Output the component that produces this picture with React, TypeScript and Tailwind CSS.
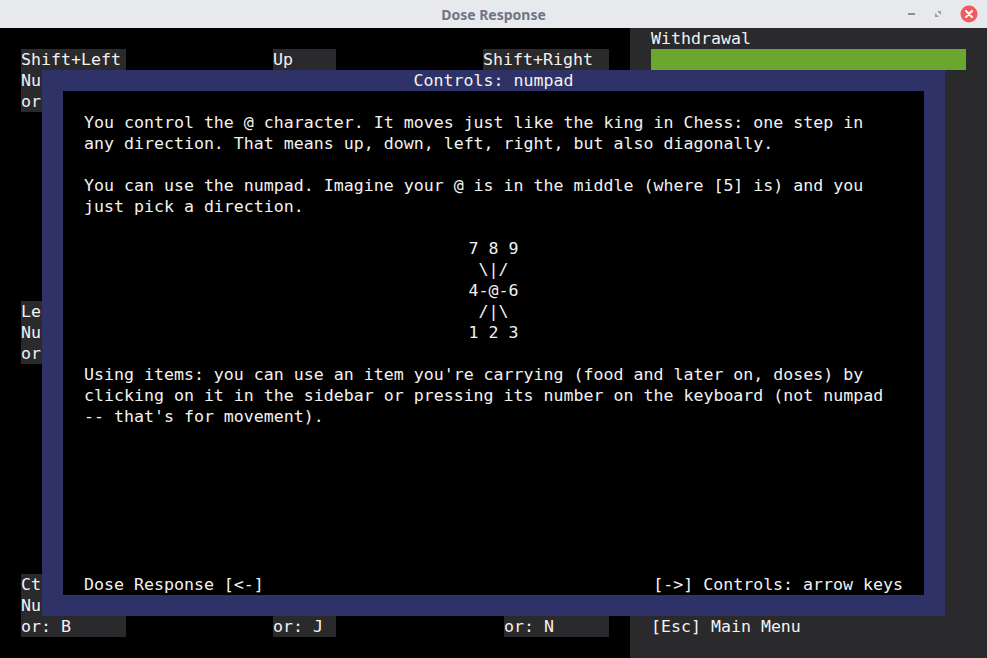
import React from "react";

const mono = "font-['DejaVu_Sans_Mono',monospace] text-[16.6px] leading-[21px]";

type BoxProps = { cls: string; lines: string[] };

function KeyBox({ cls, lines }: BoxProps) {
  return (
    <div className={`${cls} bg-[#2a292c] text-[#f2f2f2] overflow-hidden whitespace-pre flex flex-col`}>
      {lines.map((l, i) => (
        <div key={i} className="h-[21px]">
          {l}
        </div>
      ))}
    </div>
  );
}

function TitleBar() {
  return (
    <div className="h-[28px] bg-[#e8e9ec] flex items-center relative shrink-0">
      <div className="flex-1 text-center font-['Noto_Sans',sans-serif] font-bold text-[14px] text-[#6f7586]">
        Dose Response
      </div>
      <div className="absolute right-0 top-0 h-[28px] flex items-center gap-[17px] pr-[9px]">
        <svg width="10" height="10" viewBox="0 0 10 10">
          <rect x="2" y="4" width="7" height="2" fill="#8b8e96" />
        </svg>
        <svg width="10" height="10" viewBox="0 0 10 10">
          <path d="M4 2 H8 V6 Z" fill="#9a9da4" />
          <path d="M2 4 V8 H6 Z" fill="#9a9da4" />
        </svg>
        <svg width="18" height="18" viewBox="0 0 18 18">
          <circle cx="9" cy="9" r="8.5" fill="#ef5b60" />
          <path d="M6 6 L12 12 M12 6 L6 12" stroke="#ffffff" strokeWidth="2" strokeLinecap="round" />
        </svg>
      </div>
    </div>
  );
}

export default function App() {
  const diagram = ["7 8 9", "\\|/", "4-@-6", "/|\\", "1 2 3"];
  return (
    <div className="w-[987px] h-[658px] flex flex-col bg-black overflow-hidden">
      <TitleBar />
      <div className={`relative flex h-[630px] ${mono}`}>
        {/* board */}
        <div className="w-[630px] h-[630px] bg-black grid grid-cols-[repeat(60,10.5px)] grid-rows-[repeat(30,21px)]">
          <KeyBox cls="col-start-3 col-span-10 row-start-2 row-span-3" lines={["Shift+Left", "Nu", "or"]} />
          <KeyBox cls="col-start-27 col-span-6 row-start-2 row-span-3" lines={["Up", "", ""]} />
          <KeyBox cls="col-start-47 col-span-12 row-start-2 row-span-3" lines={["Shift+Right", "", ""]} />
          <KeyBox cls="col-start-3 col-span-10 row-start-14 row-span-3" lines={["Le", "Nu", "or"]} />
          <KeyBox cls="col-start-3 col-span-10 row-start-27 row-span-3" lines={["Ct", "Nu", "or: B"]} />
          <KeyBox cls="col-start-27 col-span-6 row-start-27 row-span-3" lines={["", "", "or: J"]} />
          <KeyBox cls="col-start-49 col-span-10 row-start-27 row-span-3" lines={["", "", "or: N"]} />
        </div>
        {/* sidebar */}
        <div className="flex-1 bg-[#2a292c] text-[#f2f2f2] flex flex-col pl-[21px] pr-[21px]">
          <div className="h-[21px] whitespace-pre">Withdrawal</div>
          <div className="h-[21px] w-[315px] bg-[#6ba72d]" />
          <div className="flex-1" />
          <div className="h-[21px] whitespace-pre">[Esc] Main Menu</div>
          <div className="h-[21px]" />
        </div>
        {/* modal overlay */}
        <div className="absolute left-[42px] top-[42px] w-[903px] h-[546px] bg-[#2e3267] flex flex-col px-[21px]">
          <div className="h-[21px] text-center text-[#f2f2f2] whitespace-pre">Controls: numpad</div>
          <div className="h-[504px] bg-black text-[#f2f2f2] flex flex-col px-[21px] pt-[21px] whitespace-pre">
            <div>You control the @ character. It moves just like the king in Chess: one step in</div>
            <div>any direction. That means up, down, left, right, but also diagonally.</div>
            <div className="h-[21px]" />
            <div>You can use the numpad. Imagine your @ is in the middle (where [5] is) and you</div>
            <div>just pick a direction.</div>
            <div className="h-[21px]" />
            {diagram.map((l, i) => (
              <div key={i} className="text-center">
                {l}
              </div>
            ))}
            <div className="h-[21px]" />
            <div>Using items: you can use an item you're carrying (food and later on, doses) by</div>
            <div>clicking on it in the sidebar or pressing its number on the keyboard (not numpad</div>
            <div>-- that's for movement).</div>
            <div className="flex-1" />
            <div className="flex justify-between">
              <span>Dose Response [&lt;-]</span>
              <span>[-&gt;] Controls: arrow keys</span>
            </div>
          </div>
          <div className="h-[21px]" />
        </div>
      </div>
    </div>
  );
}
